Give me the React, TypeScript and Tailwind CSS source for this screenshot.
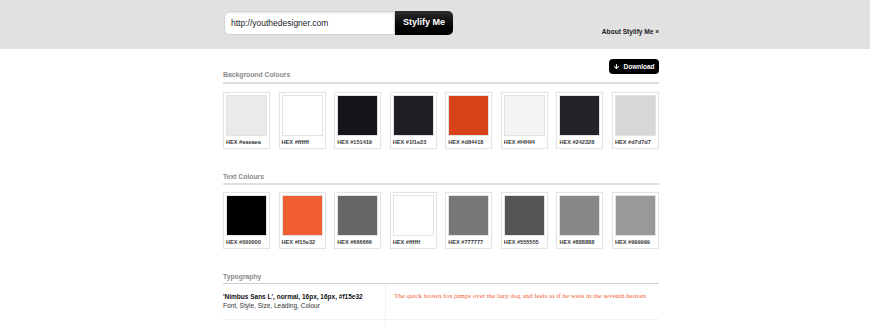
import { ArrowDown } from 'lucide-react';

const bgColours = ['#eaeaea', '#ffffff', '#151419', '#1f1e23', '#d84418', '#f4f4f4', '#242328', '#d7d7d7'];
const textColours = ['#000000', '#f15e32', '#666666', '#ffffff', '#777777', '#555555', '#888888', '#999999'];

function Swatch({ hex }: { hex: string }) {
  return (
    <div className="border border-[#e4e4e4] bg-white p-[2px] pb-[2px] shadow-[0_0_1px_rgba(0,0,0,0.05)]">
      <div className="h-[41px] border border-[#e2e2e2]" style={{ backgroundColor: hex }} />
      <div className="mt-[2px] text-[5.6px] font-bold leading-[8px] text-[#3a3a3a]">HEX {hex}</div>
    </div>
  );
}

function SectionHeading({ title }: { title: string }) {
  return <h2 className="text-[6.8px] font-bold leading-[10px] text-[#8a8a8a]">{title}</h2>;
}

export default function App() {
  return (
    <div className="min-h-[327px] bg-white font-['Liberation_Sans',Arial,sans-serif]">
      <header className="h-[49px] bg-[#e1e1e1]">
        <div className="ml-[224px] flex w-[435px] items-start justify-between pt-[11px]">
          <div className="flex h-[24px]">
            <div className="flex w-[171px] items-center rounded-l-[5px] border border-[#d4d4d4] bg-white pl-[6px] text-[8.5px] text-[#222] shadow-[inset_0_1px_2px_rgba(0,0,0,0.12)]">
              http://youthedesigner.com
            </div>
            <button className="w-[58px] rounded-r-[5px] bg-gradient-to-b from-[#2e2e2e] to-[#000] text-[9px] font-bold text-white">
              Stylify Me
            </button>
          </div>
          <a className="mt-[16px] text-[6.6px] font-bold leading-[10px] text-[#222]">About Stylify Me »</a>
        </div>
      </header>

      <main className="ml-[223px] w-[436px]">
        <div className="mt-[10px] flex h-[25px] justify-between border-b-2 border-[#dedede]">
          <div className="self-end pb-[2px]">
            <SectionHeading title="Background Colours" />
          </div>
          <button className="flex h-[15px] w-[50px] items-center justify-center gap-[3px] rounded-[4px] bg-black text-[6.5px] font-bold text-white">
            <ArrowDown size={7} strokeWidth={3.5} />
            Download
          </button>
        </div>
        <div className="mt-[8px] grid grid-cols-8 gap-[8.6px]">
          {bgColours.map(c => (
            <Swatch key={c} hex={c} />
          ))}
        </div>

        <div className="mt-[23px] border-b-2 border-[#dedede] pb-[1px]">
          <SectionHeading title="Text Colours" />
        </div>
        <div className="mt-[7px] grid grid-cols-8 gap-[8.6px]">
          {textColours.map(c => (
            <Swatch key={c} hex={c} />
          ))}
        </div>

        <div className="mt-[23px] border-b border-[#cfcfcf] pb-[1px]">
          <SectionHeading title="Typography" />
        </div>
        <div className="flex border-b border-[#f2f2f2]">
          <div className="w-[162px] pt-[8px] pb-[9px]">
            <div className="text-[6.5px] font-bold leading-[9px] text-[#111]">'Nimbus Sans L', normal, 16px, 16px, #f15e32</div>
            <div className="text-[6.5px] leading-[9px] text-[#333]">Font, Style, Size, Leading, Colour</div>
          </div>
          <div className="flex-1 border-l border-[#f0f0f0] pt-[8px] pl-[8px]">
            <p className="whitespace-nowrap font-['Liberation_Serif',serif] text-[6.95px] leading-[9px] text-[#f15e32]">
              The quick brown fox jumps over the lazy dog and feels as if he were in the seventh heaven
            </p>
          </div>
        </div>
        <div className="flex h-[20px]">
          <div className="w-[162px]" />
          <div className="flex-1 border-l border-[#f0f0f0]" />
        </div>
      </main>
    </div>
  );
}
